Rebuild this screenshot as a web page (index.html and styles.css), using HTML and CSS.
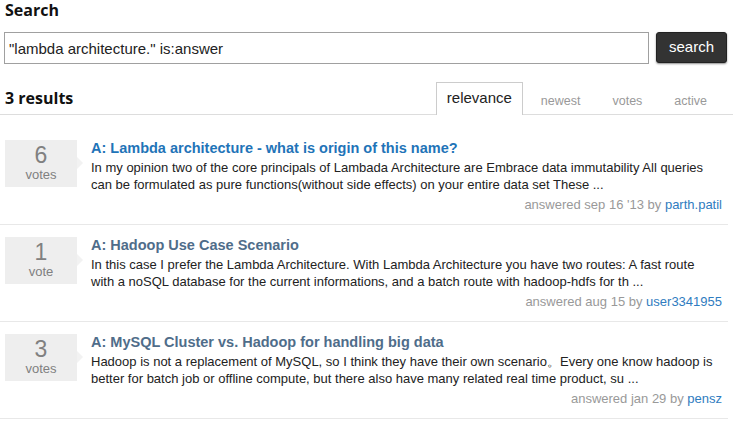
FILE: index.html
```html
<!DOCTYPE html>
<html>
<head>
<meta charset="utf-8">
<link rel="stylesheet" href="styles.css">
</head>
<body>
<div class="page">
  <h1 class="title">Search</h1>
  <form class="search-form">
    <input class="search-input" type="text" value="&quot;lambda architecture.&quot; is:answer">
    <button class="search-btn" type="button">search</button>
  </form>
  <div class="results-head">
    <h2 class="count">3 results</h2>
    <div class="tabs">
      <a class="tab active">relevance</a>
      <a class="tab">newest</a>
      <a class="tab">votes</a>
      <a class="tab">active</a>
    </div>
  </div>
  <div class="list">
    <div class="row">
      <div class="votes"><span class="num">6</span><span class="lbl">votes</span></div>
      <div class="body">
        <a class="q-title">A: Lambda architecture - what is origin of this name?</a>
        <p class="excerpt">In my opinion two of the core principals of Lambada Architecture are Embrace data immutability All queries can be formulated as pure functions(without side effects) on your entire data set These ...</p>
        <div class="meta">answered sep 16 '13 by <a class="user">parth.patil</a></div>
      </div>
    </div>
    <div class="row">
      <div class="votes"><span class="num">1</span><span class="lbl">vote</span></div>
      <div class="body">
        <a class="q-title visited">A: Hadoop Use Case Scenario</a>
        <p class="excerpt">In this case I prefer the Lambda Architecture. With Lambda Architecture you have two routes: A fast route with a noSQL database for the current informations, and a batch route with hadoop-hdfs for th ...</p>
        <div class="meta">answered aug 15 by <a class="user">user3341955</a></div>
      </div>
    </div>
    <div class="row">
      <div class="votes"><span class="num">3</span><span class="lbl">votes</span></div>
      <div class="body">
        <a class="q-title visited">A: MySQL Cluster vs. Hadoop for handling big data</a>
        <p class="excerpt">Hadoop is not a replacement of MySQL, so I think they have their own scenario。Every one know hadoop is better for batch job or offline compute, but there also have many related real time product, su ...</p>
        <div class="meta">answered jan 29 by <a class="user">pensz</a></div>
      </div>
    </div>
  </div>
</div>
</body>
</html>
```
FILE: styles.css
```css
html, body {
  margin: 0;
  padding: 0;
  background: #fff;
}
body {
  font-family: "Liberation Sans", Arial, sans-serif;
  color: #222;
}
.page {
  width: 733px;
}
.title {
  margin: 0;
  padding: 0 0 0 5px;
  height: 24px;
  font-family: "Open Sans", "DejaVu Sans", sans-serif;
  font-size: 16px;
  font-weight: 700;
  line-height: 20px;
  color: #111;
}
.search-form {
  display: flex;
  align-items: flex-start;
  gap: 7px;
  margin: 8px 0 0 4px;
}
.search-input {
  box-sizing: border-box;
  width: 645px;
  height: 32px;
  margin: 0;
  padding: 0 4px;
  border: 1px solid #a0a0a0;
  font-family: "Liberation Sans", Arial, sans-serif;
  font-size: 15px;
  color: #222;
  outline: none;
}
.search-btn {
  box-sizing: border-box;
  width: 71px;
  height: 31px;
  margin: 0;
  padding: 0 0 2px;
  border: 1px solid #222;
  border-radius: 3px;
  background: #333;
  color: #fff;
  font-family: "Liberation Sans", Arial, sans-serif;
  font-size: 15px;
  box-shadow: 0 1px 2px rgba(0,0,0,0.45);
}
.results-head {
  display: flex;
  justify-content: space-between;
  align-items: flex-end;
  margin-top: 18px;
  height: 32px;
  border-bottom: 1px solid #ddd;
}
.count {
  margin: 0 0 6px 5px;
  font-family: "Open Sans", "DejaVu Sans", sans-serif;
  font-size: 16px;
  font-weight: 700;
  line-height: 20px;
  color: #111;
}
.tabs {
  display: flex;
  align-items: flex-end;
  margin-right: 10px;
}
.tab {
  display: block;
  font-size: 12.5px;
  color: #999;
  padding: 0 16px 5px;
  line-height: 16px;
}
.tab.active {
  box-sizing: border-box;
  width: 87px;
  height: 33px;
  padding: 7px 0 0;
  margin-right: 2px;
  margin-bottom: -1px;
  text-align: center;
  border: 1px solid #ccc;
  border-bottom: none;
  background: #fff;
  font-size: 15px;
  color: #222;
}
.list {
  margin-top: 13px;
  width: 728px;
}
.row {
  display: flex;
  align-items: flex-start;
  padding: 11px 6px 11px 5px;
  border-bottom: 1px solid #e8e8e8;
}
.votes {
  position: relative;
  flex: none;
  width: 72px;
  height: 47px;
  margin-top: 1px;
  margin-right: 14px;
  background: #eee;
  display: flex;
  flex-direction: column;
  align-items: center;
  color: #808080;
}
.votes::after {
  content: "";
  position: absolute;
  right: -6px;
  top: 17px;
  border-left: 6px solid #f2f2f2;
  border-top: 6px solid transparent;
  border-bottom: 6px solid transparent;
}
.num {
  font-size: 23px;
  line-height: 24px;
  margin-top: 3px;
}
.lbl {
  font-size: 13px;
  line-height: 15px;
}
.body {
  flex: 1;
  min-width: 0;
}
.q-title {
  display: block;
  font-size: 14.5px;
  font-weight: 700;
  line-height: 18px;
  color: #1f74b8;
}
.q-title.visited {
  color: #4f6d8a;
}
.excerpt {
  margin: 2px 0 0;
  padding-right: 6px;
  font-size: 13px;
  line-height: 17px;
  color: #222;
}
.meta {
  margin-top: 3px;
  text-align: right;
  font-size: 13px;
  line-height: 17px;
  color: #999;
}
.user {
  color: #2f7cc0;
}
```
